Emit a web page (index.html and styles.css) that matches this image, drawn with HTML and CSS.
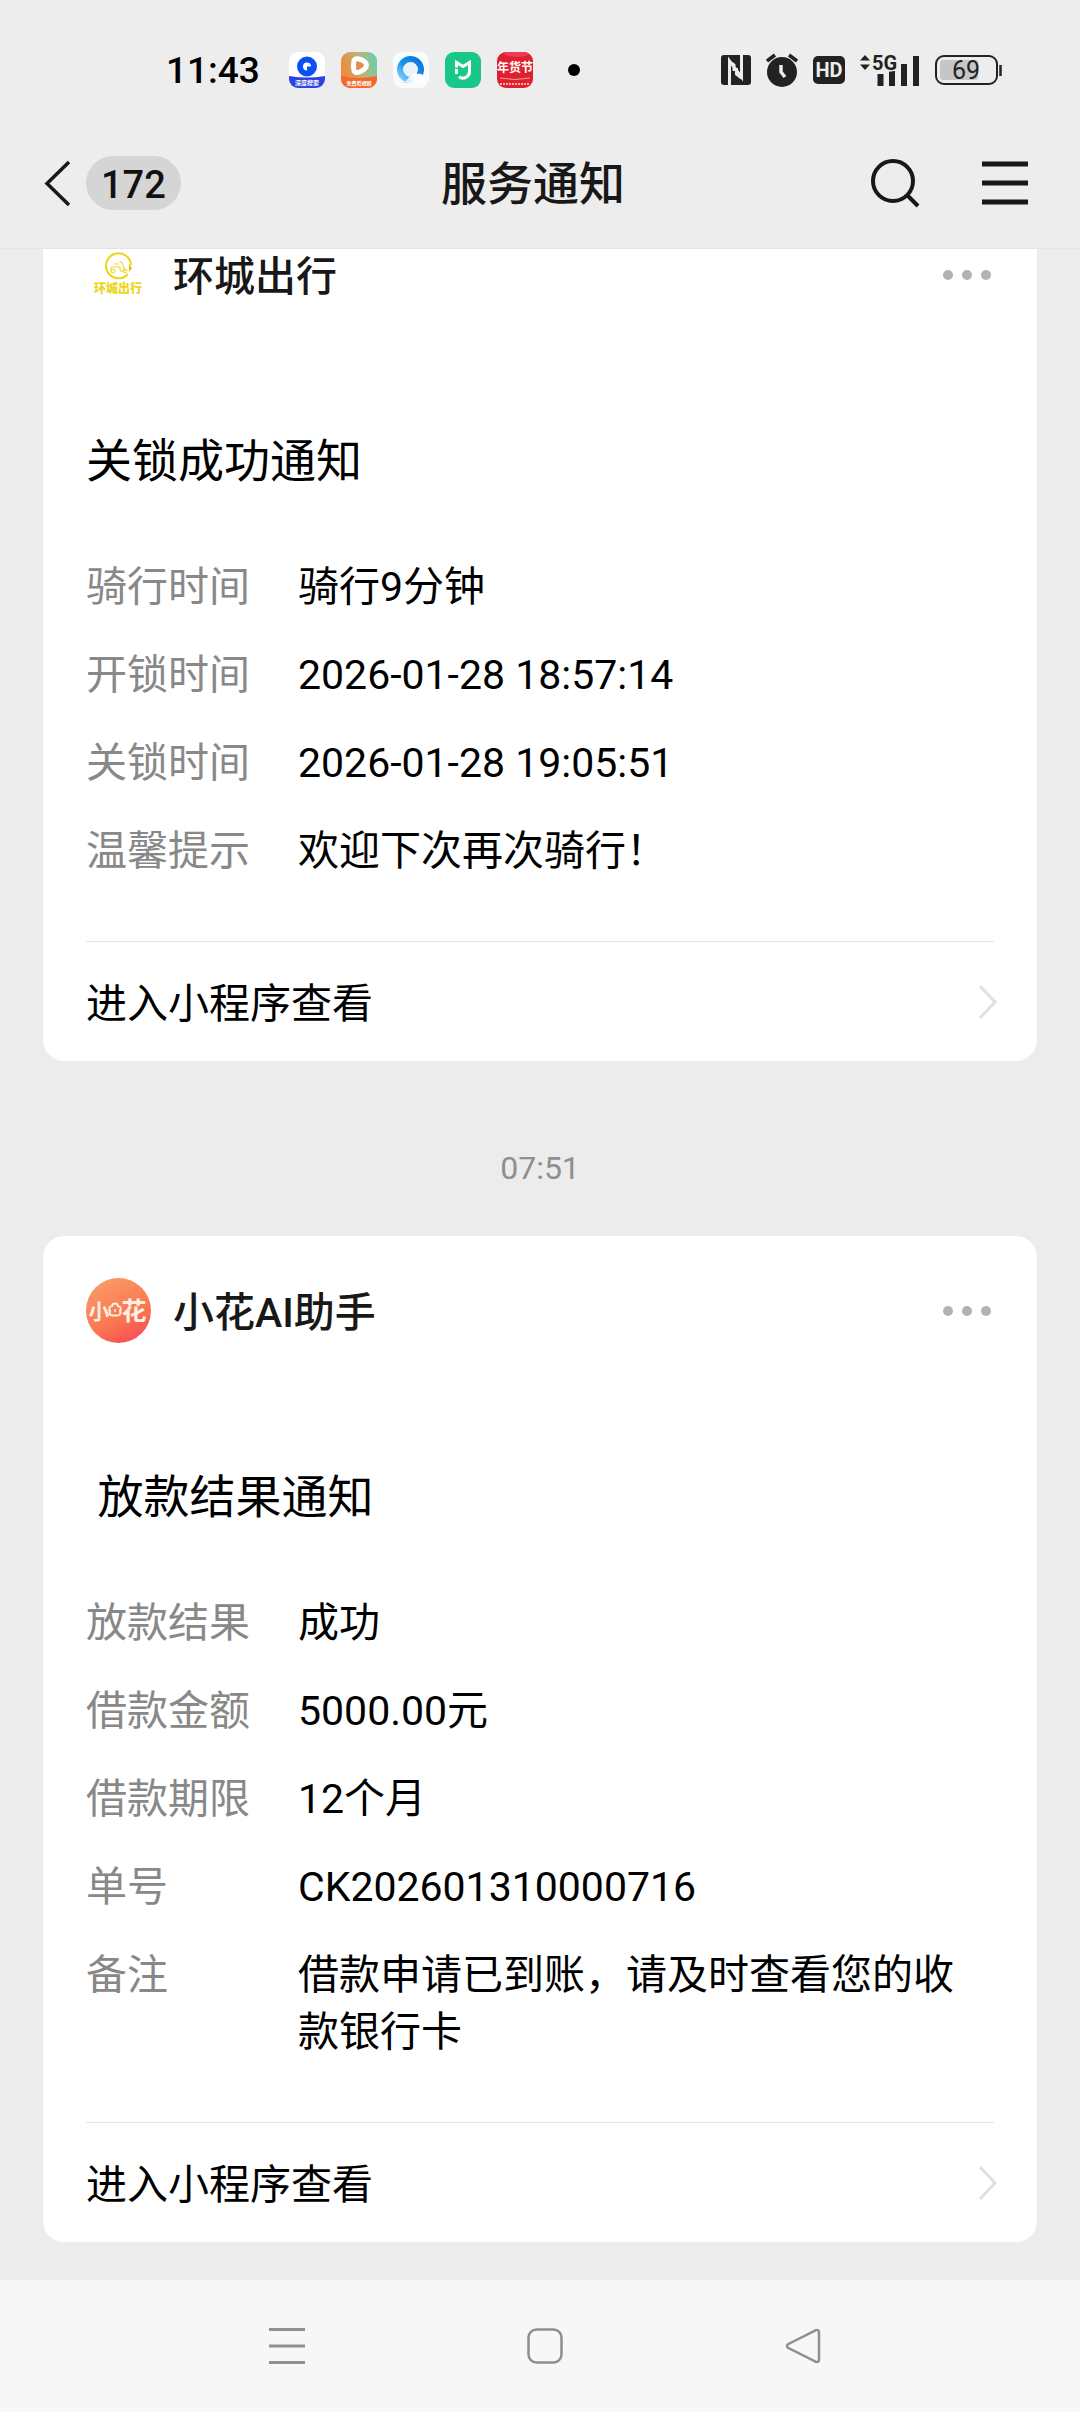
FILE: index.html
```html
<!DOCTYPE html>
<html lang="zh-CN">
<head>
<meta charset="utf-8">
<meta name="viewport" content="width=device-width, initial-scale=1">
<title>服务通知</title>
<link rel="stylesheet" href="styles.css">
</head>
<body>
<div class="status-bar">
  <div class="status-left">
    <time class="clock">11:43</time>
    <div class="app-icons">
      <svg class="app-icon" viewBox="0 0 36 36" aria-hidden="true">
        <defs><clipPath id="tile"><rect width="36" height="36" rx="9"/></clipPath></defs>
        <g clip-path="url(#tile)">
          <rect width="36" height="36" fill="#fff"/>
          <path d="M0 24q18 3 36 0v12H0z" fill="#2c42e0"/>
          <circle cx="18" cy="14.500" r="7" fill="#fff" stroke="#0a50f5" stroke-width="6"/>
          <path d="M18 14.500h4.500a4.500 4.500 0 0 1-4.500 4.500z" fill="#0a50f5"/>
          <text class="tile-text" x="18" y="33" font-size="6">深度搜索</text>
        </g>
      </svg>
      <svg class="app-icon" viewBox="0 0 36 36" aria-hidden="true">
        <defs><linearGradient id="video" x1="0" y1="0.300" x2="1" y2="0"><stop offset="0" stop-color="#f08a3c"/><stop offset="0.500" stop-color="#b9b57c"/><stop offset="1" stop-color="#5ad2b4"/></linearGradient></defs>
        <g clip-path="url(#tile)">
          <rect width="36" height="36" fill="url(#video)"/>
          <path d="M0 24q18 4 36 0v12H0z" fill="#f5682a"/>
          <path d="M13 8.500q1.500-2.500 5-1.500 7 2 7.500 6 0 4-7 7-4.500 1.500-5.500-1.500-1.200-5 0-10z" fill="#e58a4e" stroke="#fff" stroke-width="5" stroke-linejoin="round"/>
          <text class="tile-text" x="18" y="33" font-size="5">免费看短剧</text>
        </g>
      </svg>
      <svg class="app-icon" viewBox="0 0 36 36" aria-hidden="true">
        <defs>
          <linearGradient id="ring" x1="0" y1="1" x2="1" y2="0"><stop offset="0" stop-color="#8fd4f8"/><stop offset="0.450" stop-color="#1596ee"/><stop offset="1" stop-color="#1070dc"/></linearGradient>
          <linearGradient id="cloud" x1="0" y1="0" x2="1" y2="0"><stop offset="0" stop-color="#b8e0f8"/><stop offset="0.600" stop-color="#fff"/></linearGradient>
        </defs>
        <g clip-path="url(#tile)">
          <rect width="36" height="36" fill="#f9fbfd"/>
          <circle cx="17.500" cy="17.500" r="10.500" fill="#edf2f7" stroke="url(#ring)" stroke-width="6"/>
          <path d="M8 31q5-1 8-6 4-6 9-3 5-1 6 4 2 2 1 5z" fill="url(#cloud)"/>
        </g>
      </svg>
      <svg class="app-icon" viewBox="0 0 36 36" aria-hidden="true">
        <rect width="36" height="36" rx="9" fill="#19c888"/>
        <path d="M11.500 15.500v-5l6.500 4 6.500-4v9a6.500 6.500 0 0 1-10.500 5.200" fill="none" stroke="#fff" stroke-width="3"/>
        <path d="M11.500 17v5" stroke="#fff" stroke-width="3"/>
      </svg>
      <svg class="app-icon" viewBox="0 0 36 36" aria-hidden="true">
        <g clip-path="url(#tile)">
          <rect width="36" height="36" fill="#e0202c"/>
          <ellipse cx="20" cy="0" rx="14" ry="5" fill="#ee3b58"/>
          <text class="tile-text" x="18" y="20" font-size="12">年货节</text>
          <path d="M3 26q15 3 30 0" fill="none" stroke="#f6a0a0" stroke-width="1"/>
          <path d="M3 32h30" stroke="#f6b0b0" stroke-width="2" stroke-dasharray="2 1"/>
        </g>
      </svg>
    </div>
    <span class="more-dot"></span>
  </div>
  <div class="status-right">
    <svg width="30" height="30" viewBox="0 0 30 30" aria-label="NFC"><rect width="30" height="30" rx="3" fill="#222"/><path d="M8.500 30V6l12 16V0M9 7l4 3v6M20.500 23l-5-4v-6" fill="none" stroke="#ececec" stroke-width="3"/></svg>
    <svg width="32" height="34" viewBox="0 0 32 34" aria-label="闹钟"><circle cx="16" cy="19" r="15" fill="#222"/><path d="M1 8l8-6M31 8l-8-6" stroke="#222" stroke-width="3.500"/><path d="M15 12v7l4 5" fill="none" stroke="#ececec" stroke-width="3.500"/></svg>
    <span class="hd-badge">HD</span>
    <svg width="60" height="34" viewBox="0 0 60 34" aria-label="5G 信号"><path d="M0 7.500L5 2l5 5.500zM0 11.500h10L5 17z" fill="#222"/><path d="M20.500 33V21M32 33V18M44 33V11M56 33V3" stroke="#222" stroke-width="6"/><text class="net-type" x="12" y="17">5G</text></svg>
    <svg width="68" height="30" viewBox="0 0 68 30" aria-label="电量 69%"><rect x="5" y="5" width="38" height="20" rx="3" fill="#c6c6c6"/><rect x="1" y="1" width="61" height="28" rx="8" fill="none" stroke="#222" stroke-width="2"/><path d="M65.500 10v11" stroke="#222" stroke-width="2.500"/><text class="battery-level" x="31" y="24">69</text></svg>
  </div>
</div>

<header class="title-bar">
  <button class="back" aria-label="返回">
    <svg width="28" height="48" viewBox="0 0 28 48" aria-hidden="true"><path d="M26 3L4 24.500 26 46" fill="none" stroke="#181818" stroke-width="3.500"/></svg>
    <span class="unread">172</span>
  </button>
  <h1>服务通知</h1>
  <div class="title-actions">
    <button aria-label="搜索"><svg width="52" height="52" viewBox="0 0 52 52"><circle cx="23" cy="24" r="20" fill="none" stroke="#181818" stroke-width="4"/><path d="M37 38l11 11" stroke="#181818" stroke-width="4"/></svg></button>
    <button aria-label="菜单"><svg width="46" height="44" viewBox="0 0 46 44"><path d="M0 3h46M0 22h46M0 41h46" stroke="#181818" stroke-width="5"/></svg></button>
  </div>
</header>

<main class="messages">
  <div class="message-list">
    <article class="card">
      <div class="card-head">
        <svg class="avatar" viewBox="0 0 65 65" aria-hidden="true">
          <g fill="none" stroke="#ecd61c" stroke-width="2">
            <path d="M42 32A12.500 12.500 0 1 1 45 23"/>
            <path d="M25 29v-4h9v4h5l-3-9h-3M28 22h5" stroke-width="1"/>
            <circle cx="27" cy="29" r="2" stroke-width="1"/><circle cx="39" cy="29" r="2" stroke-width="1"/>
          </g>
          <path d="M43 22l3 4-3 4z" fill="#e8b80c"/>
          <text class="logo-ride" x="32" y="51">环城出行</text>
        </svg>
        <span class="sender">环城出行</span>
        <button class="more" aria-label="更多"><i></i><i></i><i></i></button>
      </div>
      <h2>关锁成功通知</h2>
      <dl class="fields">
        <dt>骑行时间</dt><dd>骑行9分钟</dd>
        <dt>开锁时间</dt><dd>2026-01-28 18:57:14</dd>
        <dt>关锁时间</dt><dd>2026-01-28 19:05:51</dd>
        <dt>温馨提示</dt><dd>欢迎下次再次骑行！</dd>
      </dl>
      <a class="card-link" href="#">
        <span>进入小程序查看</span>
        <svg width="20" height="36" viewBox="0 0 20 36" aria-hidden="true"><path d="M2 2l15 16L2 34" fill="none" stroke="#e0e0e0" stroke-width="3"/></svg>
      </a>
    </article>

    <time class="stamp">07:51</time>

    <article class="card">
      <div class="card-head">
        <svg class="avatar" viewBox="0 0 65 65" aria-hidden="true">
          <defs><linearGradient id="bloom" x1="0.300" y1="0" x2="0.800" y2="1"><stop offset="0" stop-color="#fb9a68"/><stop offset="0.600" stop-color="#fb7650"/><stop offset="1" stop-color="#f84a58"/></linearGradient></defs>
          <circle cx="32.500" cy="32.500" r="32.500" fill="url(#bloom)"/>
          <text class="logo-bloom" x="13" y="41" font-size="21">小</text>
          <text class="logo-bloom" x="48" y="42" font-size="25">花</text>
          <g fill="none" stroke="#fff0e4" stroke-width="2"><path d="M29 25.500a3 3 0 0 1 3 2.500 3 3 0 0 1 2 5 3 3 0 0 1-3 4.500h-4a3 3 0 0 1-3-4.500 3 3 0 0 1 2-5 3 3 0 0 1 3-2.500z"/><path d="M29 31v3" stroke-width="1.500"/></g>
        </svg>
        <span class="sender">小花AI助手</span>
        <button class="more" aria-label="更多"><i></i><i></i><i></i></button>
      </div>
      <h2>&nbsp;放款结果通知</h2>
      <dl class="fields">
        <dt>放款结果</dt><dd>成功</dd>
        <dt>借款金额</dt><dd>5000.00元</dd>
        <dt>借款期限</dt><dd>12个月</dd>
        <dt>单号</dt><dd>CK202601310000716</dd>
        <dt>备注</dt><dd>借款申请已到账，请及时查看您的收款银行卡</dd>
      </dl>
      <a class="card-link" href="#">
        <span>进入小程序查看</span>
        <svg width="20" height="36" viewBox="0 0 20 36" aria-hidden="true"><path d="M2 2l15 16L2 34" fill="none" stroke="#e0e0e0" stroke-width="3"/></svg>
      </a>
    </article>
  </div>
</main>

<nav class="system-nav">
  <button aria-label="最近任务"><svg width="36" height="36" viewBox="0 0 36 36"><path d="M0 1.500h36M0 18h36M0 34.500h36" stroke="#8f8f8f" stroke-width="3"/></svg></button>
  <button aria-label="主页"><svg width="36" height="36" viewBox="0 0 36 36"><rect x="1.500" y="1.500" width="33" height="33" rx="8" fill="none" stroke="#8f8f8f" stroke-width="2.500"/></svg></button>
  <button aria-label="返回"><svg width="36" height="36" viewBox="0 0 36 36"><path d="M30.500 2.300L3 16.200q-2 1.800 0 3.600l27.500 13.900q3.500 1 3.500-2V4.300q0-3-3.500-2z" fill="none" stroke="#8f8f8f" stroke-width="2.500"/></svg></button>
</nav>
</body>
</html>
```
FILE: styles.css
```css
* {
  box-sizing: border-box;
  margin: 0;
  padding: 0;
}

body {
  display: flex;
  flex-direction: column;
  height: 100vh;
  background: #ededed;
  color: #000;
  font-family: Roboto, "Noto Sans CJK SC", sans-serif;
  font-size: 41px;
  line-height: 57px;
}

button {
  display: flex;
  align-items: center;
  border: 0;
  background: none;
  color: inherit;
  font: inherit;
}

svg {
  display: block;
  flex: none;
}

/* Status bar */
.status-bar {
  display: flex;
  justify-content: space-between;
  flex: none;
  height: 118px;
  padding: 22px 77px 0 166px;
}

.status-left,
.status-right {
  display: flex;
  align-items: center;
  height: 96px;
}

.clock {
  width: 123px;
  font-size: 37px;
  font-weight: 500;
}

.app-icons {
  display: flex;
  gap: 16px;
}

.app-icon {
  width: 36px;
  height: 36px;
}

.tile-text {
  fill: #fff;
  font-weight: 700;
  text-anchor: middle;
}

.more-dot {
  width: 12px;
  height: 12px;
  margin-left: 35px;
  border-radius: 50%;
  background: #000;
}

.status-right {
  gap: 15px;
}

.hd-badge {
  width: 32px;
  height: 28px;
  border-radius: 5px;
  background: #222;
  color: #ececec;
  font-size: 20px;
  font-weight: 700;
  line-height: 28px;
  text-align: center;
}

.net-type {
  fill: #222;
  stroke: #ededed;
  stroke-width: 3px;
  paint-order: stroke;
  font-size: 20px;
  font-weight: 700;
}

.battery-level {
  fill: #222;
  font-size: 25px;
  text-anchor: middle;
}

/* Title bar */
.title-bar {
  display: grid;
  grid-template-columns: 1fr auto 1fr;
  align-items: center;
  flex: none;
  height: 131px;
  padding: 0 52px 1px 38px;
  border-bottom: 1px solid #e4e4e4;
}

.back {
  gap: 15px;
  padding-left: 5px;
}

.unread {
  height: 54px;
  padding: 2px 15px 0;
  border-radius: 27px;
  background: #d5d5d5;
  color: #111;
  font-size: 38px;
  font-weight: 500;
  line-height: 54px;
}

h1 {
  padding-top: 4px;
  color: #181818;
  font-size: 46px;
  font-weight: 500;
}

.title-actions {
  display: flex;
  align-items: center;
  justify-content: flex-end;
  gap: 60px;
}

/* Messages: the list opens scrolled to its newest item */
.messages {
  display: flex;
  flex: 1;
  flex-direction: column-reverse;
  min-height: 0;
  overflow-y: auto;
  scrollbar-width: none;
  background: #ececec;
}

.message-list {
  padding: 0 43px 38px;
}

.card {
  padding: 42px 43px 0;
  border-radius: 21px;
  background: #fff;
}

.card-head {
  display: flex;
  align-items: center;
}

.avatar {
  width: 65px;
  height: 65px;
}

.logo-ride {
  fill: #ecd61c;
  font-size: 12px;
  font-weight: 900;
  text-anchor: middle;
}

.logo-bloom {
  fill: #fff0e4;
  font-weight: 700;
  text-anchor: middle;
}

.sender {
  flex: 1;
  margin-left: 22px;
  padding-top: 6px;
  color: #181818;
  font-weight: 500;
}

.more {
  gap: 9px;
  padding: 20px 3px;
}

.more i {
  width: 10px;
  height: 10px;
  border-radius: 50%;
  background: #b2b2b2;
}

h2 {
  margin-top: 122px;
  font-size: 46px;
  font-weight: 400;
  line-height: 64px;
}

.fields {
  display: grid;
  grid-template-columns: 212px 1fr;
  row-gap: 31px;
  margin-top: 66px;
}

.fields dt {
  color: #888;
}

.card-link {
  display: flex;
  align-items: center;
  justify-content: space-between;
  height: 120px;
  margin-top: 61px;
  border-top: 1px solid #e2e2e2;
  color: #000;
  text-decoration: none;
}

.card-link span {
  padding-top: 6px;
}

.card-link svg {
  margin-right: -4px;
}

.stamp {
  display: block;
  padding: 88px 0 49px;
  color: #8f8f8f;
  font-size: 32px;
  line-height: 38px;
  text-align: center;
}

/* System navigation */
.system-nav {
  display: flex;
  align-items: center;
  justify-content: center;
  flex: none;
  gap: 222px;
  height: 132px;
  padding-left: 10px;
  background: #f7f7f7;
}
```
